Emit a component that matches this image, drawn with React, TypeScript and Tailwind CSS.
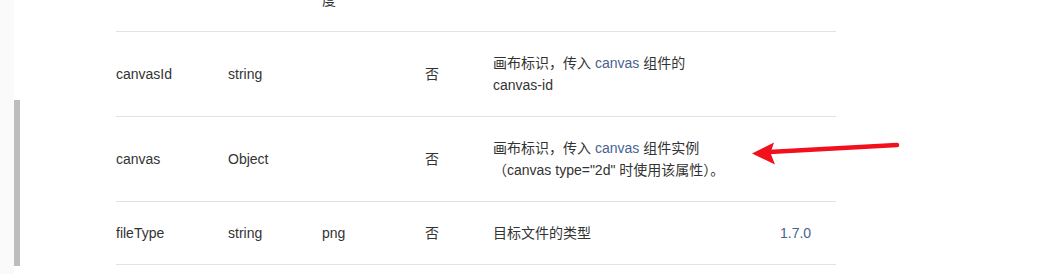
import React from "react";

const font = { fontFamily: '"Liberation Sans", "Noto Sans CJK SC", sans-serif' };

type Row = {
  name: string;
  type: string;
  def: string;
  required: string;
  desc: React.ReactNode;
  since?: string;
};

const Link = ({ children }: { children: React.ReactNode }) => (
  <span className="text-[#476391]">{children}</span>
);

const rows: Row[] = [
  {
    name: "canvasId",
    type: "string",
    def: "",
    required: "否",
    desc: (
      <>
        画布标识，传入 <Link>canvas</Link> 组件的
        <br />
        canvas-id
      </>
    ),
  },
  {
    name: "canvas",
    type: "Object",
    def: "",
    required: "否",
    desc: (
      <>
        画布标识，传入 <Link>canvas</Link> 组件实例
        <br />
        （canvas type="2d" 时使用该属性）。
      </>
    ),
  },
  {
    name: "fileType",
    type: "string",
    def: "png",
    required: "否",
    desc: "目标文件的类型",
    since: "1.7.0",
  },
];

const cols = "grid grid-cols-[112px_94px_103px_68px_287px_56px]";

export default function App() {
  return (
    <div className="relative flex h-[274px] w-[1041px] overflow-hidden bg-white text-[14px] leading-[22px] text-[#333]" style={font}>
      <div className="w-[14px] shrink-0 bg-[#fafafa]" />
      <div className="w-[6px] shrink-0">
        <div className="mt-[100px] h-[166px] bg-[#bdbdbd]" />
      </div>

      <div className="ml-[96px] w-[720px]">
        <div className={`${cols} h-[31px] content-end overflow-hidden`}>
          <div />
          <div />
          <div className="pb-5">度</div>
        </div>
        {rows.map((r) => (
          <div key={r.name} className={`${cols} items-center border-t border-[#e3e3e3] py-5`}>
            <div>{r.name}</div>
            <div>{r.type}</div>
            <div>{r.def}</div>
            <div>{r.required}</div>
            <div className="whitespace-nowrap">{r.desc}</div>
            <div className="text-[#476391]">{r.since}</div>
          </div>
        ))}
        <div className="border-t border-[#e3e3e3]" />
      </div>

      <svg className="absolute left-[745px] top-[135px]" width="160" height="30" viewBox="0 0 160 30">
        <line x1="152" y1="10" x2="24" y2="17" stroke="#f2101c" strokeWidth="4.5" strokeLinecap="round" />
        <path d="M7 18.5 L29 7.5 L25.5 18 L30 29.5 Z" fill="#f2101c" />
      </svg>
    </div>
  );
}
